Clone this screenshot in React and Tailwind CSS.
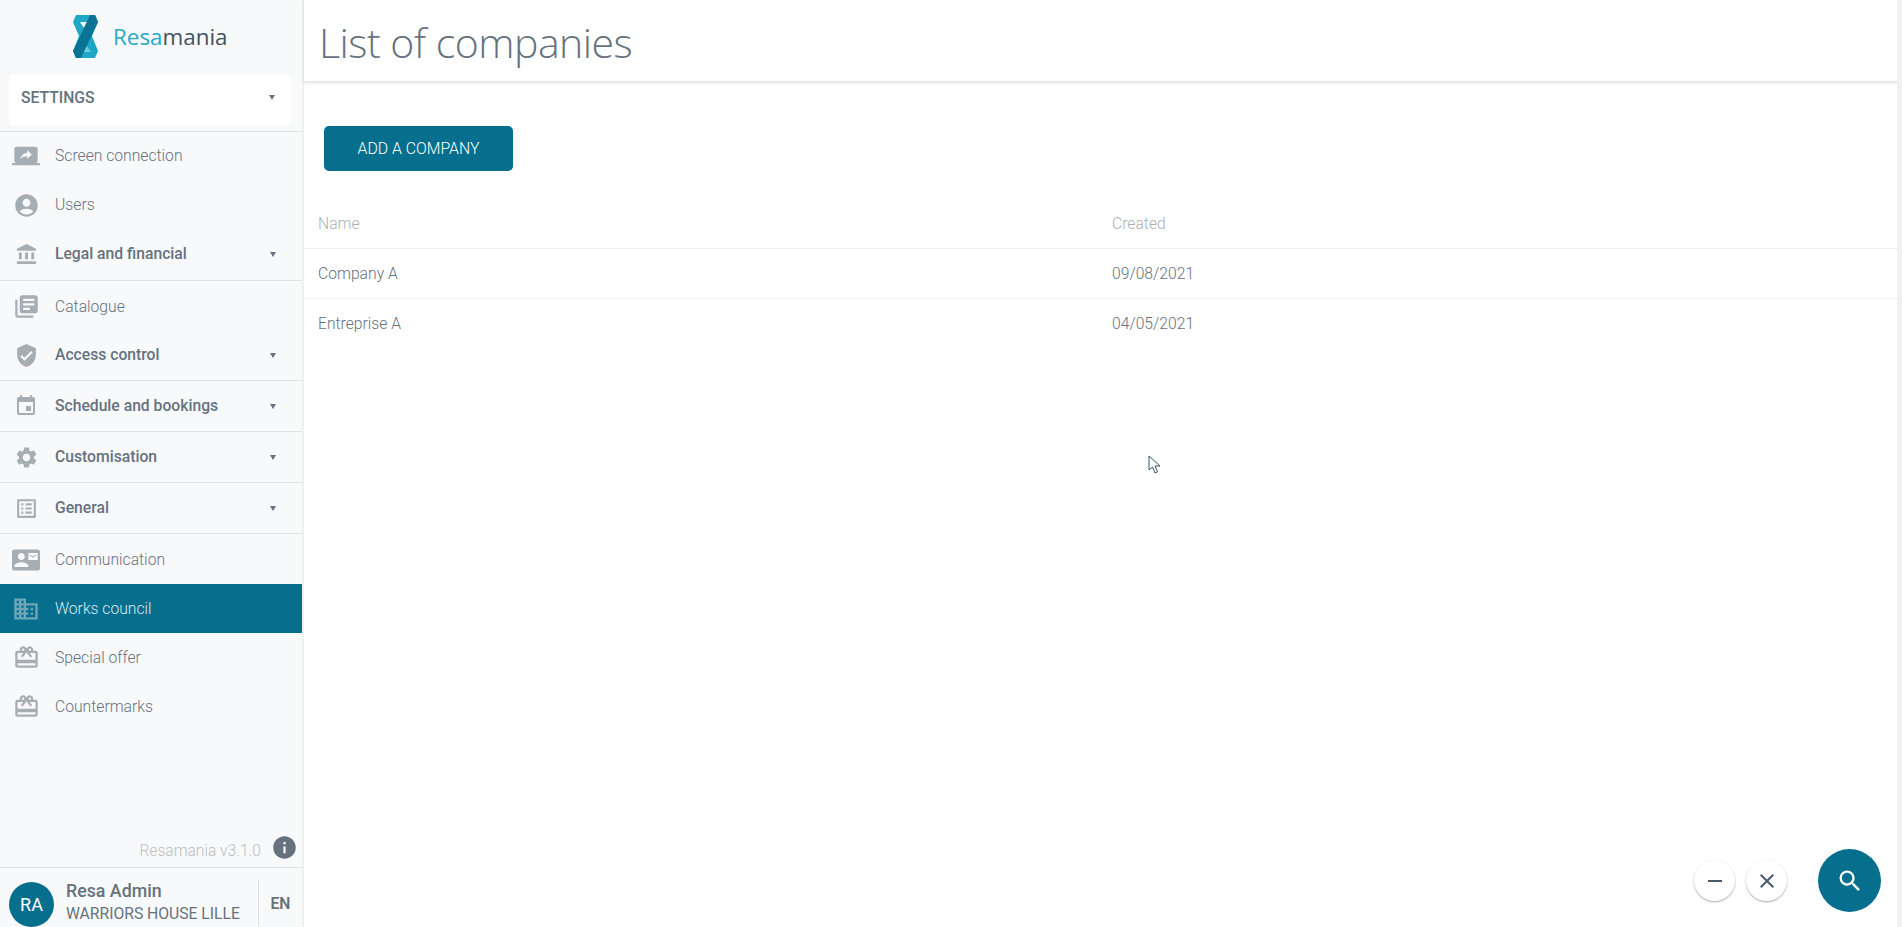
import React from 'react';
import {
  MdScreenShare,
  MdAccountCircle,
  MdAccountBalance,
  MdLibraryBooks,
  MdVerifiedUser,
  MdEvent,
  MdSettings,
  MdOutlineListAlt,
  MdContactMail,
  MdDomain,
  MdOutlineCardGiftcard,
  MdSearch,
  MdInfo,
  MdRemove,
  MdClose,
} from 'react-icons/md';

const MENU = [
  { icon: MdScreenShare, label: 'Screen connection', size: 'text-[28px]', row: 'h-[49px] pb-[1px]' },
  { icon: MdAccountCircle, label: 'Users', size: 'text-[27px]', row: 'h-[49px] pb-[1px]' },
  { icon: MdAccountBalance, label: 'Legal and financial', size: 'text-[23px]', group: true, row: 'pb-[2px]' },
  { icon: MdLibraryBooks, label: 'Catalogue', size: 'text-[27px]', row: 'h-[49px] pt-[2px]' },
  { icon: MdVerifiedUser, label: 'Access control', size: 'text-[25px]', group: true, row: 'pb-0' },
  { icon: MdEvent, label: 'Schedule and bookings', size: 'text-[24px]', group: true, row: 'pb-0' },
  { icon: MdSettings, label: 'Customisation', size: 'text-[25px]', group: true, row: 'pb-0' },
  { icon: MdOutlineListAlt, label: 'General', size: 'text-[25px]', group: true, row: 'pb-0' },
  { icon: MdContactMail, label: 'Communication', size: 'text-[28px]', row: 'h-[50px] pt-[2px]' },
  { icon: MdDomain, label: 'Works council', size: 'text-[28px]', active: true },
  { icon: MdOutlineCardGiftcard, label: 'Special offer', size: 'text-[27px]', row: 'h-[49px]' },
  { icon: MdOutlineCardGiftcard, label: 'Countermarks', size: 'text-[27px]', row: 'h-[49px]' },
];

const COMPANIES = [
  { name: 'Company A', created: '09/08/2021' },
  { name: 'Entreprise A', created: '04/05/2021' },
];

function Logo() {
  return (
    <svg width="25" height="43" viewBox="0 0 25 43">
      <path d="M3 0H22L25 7 19 21 25 36 22 43H3L0 36 6 21 0 7z" fill="#1fa8c6" />
      <path d="M7 7h11l-5 9z" fill="#f8f9fb" />
      <path d="M13 30l5 7H9z" fill="#6fcbe0" />
      <path d="M17 0h5l3 7L8 43H3l-3-7z" fill="#0a7393" />
    </svg>
  );
}

function Caret({ className }) {
  return <span className={`ml-auto h-0 w-0 border-x-[3px] border-t-[5px] border-x-transparent border-t-[#66727e] ${className}`} />;
}

function MenuItem({ item }) {
  const Icon = item.icon;
  if (item.active) {
    return (
      <div className="flex h-[49px] items-center bg-[#076f8e]">
        <span className="mr-[3px] flex w-[52px] justify-center">
          <Icon className={`${item.size} text-[#6fa6ba]`} />
        </span>
        <span className="text-[15.7px] font-light text-[#d8e9ef]">{item.label}</span>
      </div>
    );
  }
  if (item.group) {
    return (
      <div className={`flex h-[51px] items-center border-b border-[#dfe2e5] ${item.row}`}>
        <span className="mr-[3px] flex w-[52px] justify-center">
          <Icon className={`${item.size} text-[#a6adb3]`} />
        </span>
        <span className="text-[15.7px] font-medium text-[#66727e]">{item.label}</span>
        <Caret className="mr-[26px]" />
      </div>
    );
  }
  return (
    <div className={`flex items-center ${item.row}`}>
      <span className="mr-[3px] flex w-[52px] justify-center">
        <Icon className={`${item.size} text-[#a6adb3]`} />
      </span>
      <span className="text-[15.7px] font-light text-[#66727e]">{item.label}</span>
    </div>
  );
}

function Sidebar() {
  return (
    <aside className="flex h-full w-[304px] shrink-0 flex-col border-r-2 border-[#eff1f1] bg-[#f8f9fb]">
      <div className="flex h-[75px] items-center gap-[15px] pb-[2px] pl-[73px]">
        <Logo />
        <span className="pt-[1px] font-['Open_Sans',sans-serif] text-[22.4px] leading-none">
          <span className="text-[#26a9c7]">Resa</span>
          <span className="text-[#3f5363]">mania</span>
        </span>
      </div>
      <div className="mr-[11px] ml-[9px] flex h-[50px] shrink-0 items-center bg-white pb-[5px] pl-[12px]">
        <span className="text-[15.7px] font-medium text-[#66727e]">SETTINGS</span>
        <Caret className="mr-[16px]" />
      </div>
      <nav className="mt-[6px] border-t border-[#dfe2e5]">
        {MENU.map((item) => (
          <MenuItem key={item.label} item={item} />
        ))}
      </nav>
      <div className="mt-auto flex items-center justify-end pr-[4px] pb-[4px]">
        <span className="mt-[7px] mr-[10px] text-[15.6px] font-light text-[#b9bdc1]">Resamania v3.1.0</span>
        <MdInfo className="text-[27px] text-[#66727e]" />
      </div>
      <div className="flex h-[60px] shrink-0 items-center border-t border-[#dfe2e5] pl-[9px]">
        <div className="mt-[14px] flex h-[45px] w-[45px] shrink-0 items-center justify-center rounded-full bg-[#076f8e] text-[18px] text-white">
          RA
        </div>
        <div className="mt-[8px] ml-[12px] w-[192px] leading-none">
          <div className="text-[17.8px] font-medium text-[#66727e]">Resa Admin</div>
          <div className="mt-[6px] text-[15.7px] text-[#66727e]">WARRIORS HOUSE LILLE</div>
        </div>
        <div className="mt-[12px] flex h-[47px] flex-1 items-center justify-center border-l border-[#dfe2e5] text-[15.7px] font-semibold text-[#66727e]">
          EN
        </div>
      </div>
    </aside>
  );
}

function CompanyTable() {
  return (
    <div className="mt-[22px] text-[15.7px] font-light">
      <div className="grid h-[56px] grid-cols-[794px_1fr] border-b border-[#eceeef] pt-[7px] pl-[14px] text-[#a9b2b3]">
        <span className="self-center">Name</span>
        <span className="self-center">Created</span>
      </div>
      {COMPANIES.map((company) => (
        <div key={company.name} className="grid h-[50px] grid-cols-[794px_1fr] border-b border-[#eceeef] pl-[14px] text-[#66727e] last:border-b-0">
          <span className="self-center">{company.name}</span>
          <span className="self-center">{company.created}</span>
        </div>
      ))}
    </div>
  );
}

export default function App() {
  return (
    <div className="relative flex h-[927px] overflow-hidden bg-white font-['Roboto',sans-serif]">
      <Sidebar />
      <main className="min-w-0 flex-1">
        <header className="flex h-[82px] items-center border-b border-[#e4e6e6] pl-[15px] shadow-[0_1px_3px_rgba(0,0,0,0.12)]">
          <h1 className="pt-[4px] font-['Open_Sans',sans-serif] text-[41px] font-light tracking-[-0.5px] text-[#66727e]">List of companies</h1>
        </header>
        <div className="pt-[44px]">
          <button className="ml-[20px] flex h-[45px] w-[189px] items-center justify-center rounded-[5px] bg-[#076f8e] pt-[1px] text-[15.8px] font-light text-white">
            ADD A COMPANY
          </button>
          <CompanyTable />
        </div>
      </main>
      <div className="w-[5px] shrink-0 bg-[#f1f1f1]" />

      <svg className="absolute top-[455px] left-[1148px]" width="14" height="20" viewBox="0 0 14 20">
        <path d="M1 1v14l3.5-3 2.5 6 2.5-1-2.5-6H12z" fill="#fff" stroke="#37566b" strokeWidth="1" />
      </svg>

      <button className="absolute top-[860px] left-[1694px] flex h-[41px] w-[41px] items-center justify-center rounded-full bg-white text-[#4a5b6e] shadow-[0_1px_2px_rgba(0,0,0,0.35)]">
        <MdRemove className="text-[24px]" />
      </button>
      <button className="absolute top-[860px] left-[1746px] flex h-[41px] w-[41px] items-center justify-center rounded-full bg-white text-[#4a5b6e] shadow-[0_1px_2px_rgba(0,0,0,0.35)]">
        <MdClose className="text-[24px]" />
      </button>
      <button className="absolute top-[849px] left-[1818px] flex h-[63px] w-[63px] items-center justify-center rounded-full bg-[#076f8e] text-white">
        <MdSearch className="text-[28px]" />
      </button>
    </div>
  );
}
